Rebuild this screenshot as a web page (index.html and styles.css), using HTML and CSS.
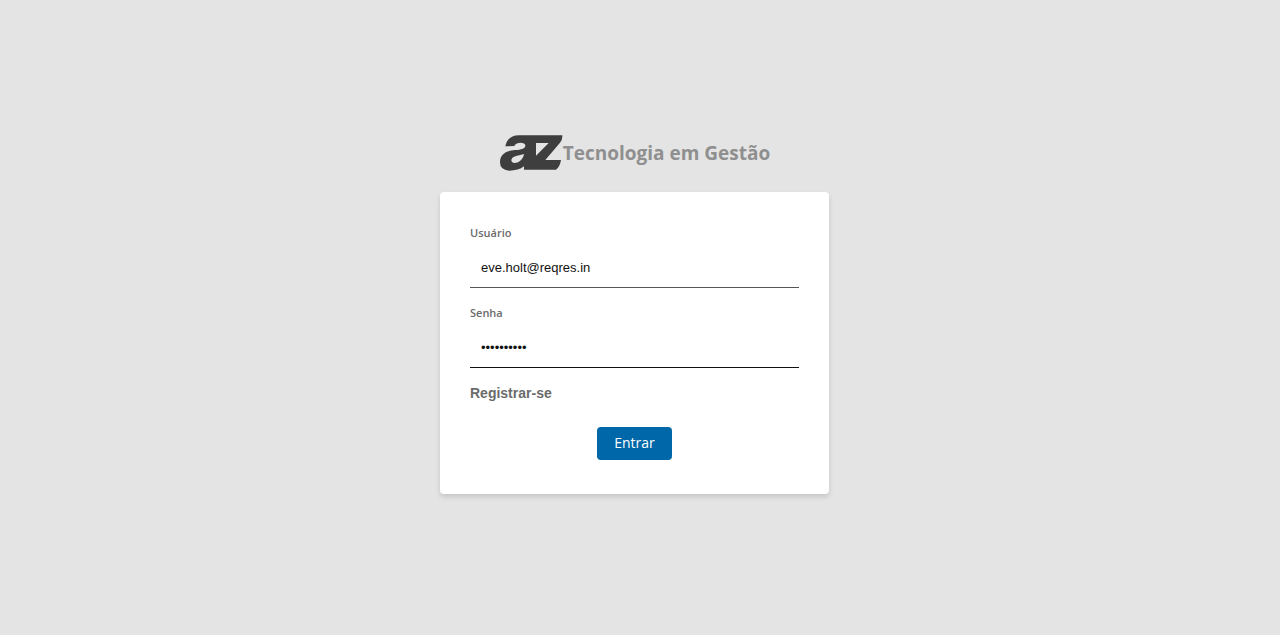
FILE: index.html
```html
<!DOCTYPE html>
<html lang="pt-BR">
<head>
<meta charset="utf-8">
<meta name="viewport" content="width=device-width, initial-scale=1">
<title>AZ Tecnologia em Gestão</title>
<link rel="stylesheet" href="styles.css">
</head>
<body>
<main class="login">
  <header class="brand">
    <svg class="brand-logo" viewBox="24 30 192 108" role="img" aria-label="az">
      <path fill="#3e3e3f" fill-rule="evenodd" d="M43 64C47 43 60 31 84 31H214Q215 43 207 53L163 105H210Q207 125 195 134H99V124Q83 137 54 137Q27 135 27 112C27 88 45 77 72 75C91 74 102 71 103 62C104 51 76 49 70 63ZM135 54V92L173 54ZM99 87C85 92 62 92 61 106C61 120 94 116 99 87Z"/>
    </svg>
    <h1 class="brand-name">Tecnologia em Gestão</h1>
  </header>
  <form class="card">
    <div class="field">
      <label class="field-label" for="user">Usuário</label>
      <input class="field-input field-input-soft" id="user" type="text" value="eve.holt@reqres.in">
    </div>
    <div class="field">
      <label class="field-label" for="password">Senha</label>
      <input class="field-input" id="password" type="password" value="cityslicka">
    </div>
    <a class="register" href="#">Registrar-se</a>
    <button class="submit" type="submit">Entrar</button>
  </form>
</main>
</body>
</html>
```
FILE: styles.css
```css
* {
  box-sizing: border-box;
}

body {
  margin: 0;
  background: #e4e4e4;
  font-family: "Open Sans", sans-serif;
}

.login {
  min-height: 100vh;
  padding: 0 11px 7px 0;
  display: flex;
  flex-direction: column;
  align-items: center;
  justify-content: center;
}

.brand {
  display: flex;
  align-items: center;
  margin-bottom: 21px;
}

.brand-logo {
  width: 64px;
  height: 36px;
}

.brand-name {
  margin: 0;
  font-size: 19px;
  line-height: 36px;
  font-weight: 700;
  color: #8f8f8f;
}

.card {
  width: 100%;
  max-width: 389px;
  padding: 32px 30px 34px;
  display: flex;
  flex-direction: column;
  background: #fff;
  border-radius: 4px;
  box-shadow: 0 3px 5px rgba(0, 0, 0, 0.13);
}

.field {
  display: flex;
  flex-direction: column;
  gap: 2px;
  margin-bottom: 16px;
}

.field-label {
  font-size: 11px;
  line-height: 18px;
  font-weight: 600;
  color: #6b6b6b;
}

.field-input {
  width: 100%;
  height: 44px;
  padding: 5px 11px 0;
  border: 0;
  border-bottom: 1px solid #111;
  background: transparent;
  font-family: "Liberation Sans", Arial, sans-serif;
  font-size: 13px;
  color: #111;
  outline: none;
}

.field-input-soft {
  border-bottom-color: #555;
}

.register {
  align-self: flex-start;
  font-family: "Liberation Sans", Arial, sans-serif;
  font-size: 14px;
  line-height: 18px;
  font-weight: 700;
  color: #6b6b6b;
  text-decoration: none;
}

.submit {
  align-self: center;
  margin-top: 25px;
  height: 33px;
  padding: 0 17px 1px;
  border: 0;
  border-radius: 4px;
  background: #0067a8;
  color: #fff;
  font-family: inherit;
  font-size: 14px;
}
```
